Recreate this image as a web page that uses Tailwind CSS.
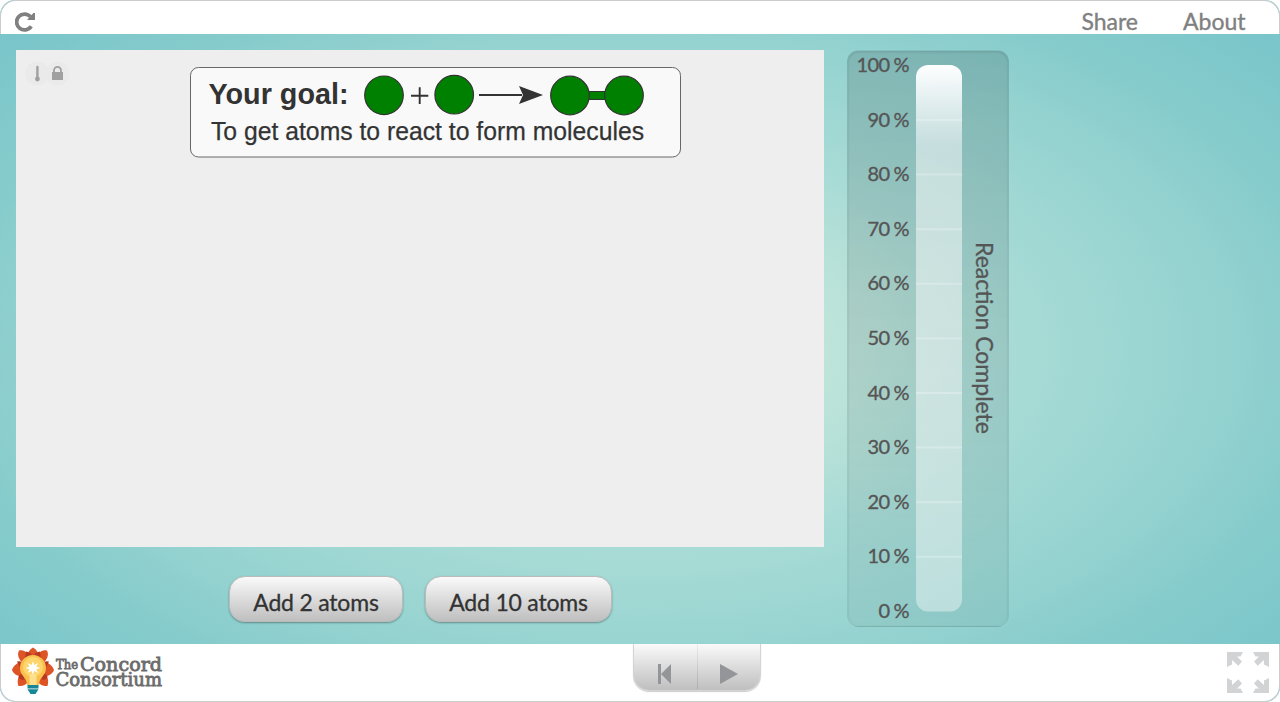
<!DOCTYPE html>
<html lang="en">
<head>
<meta charset="utf-8">
<title>Reaction Complete</title>
<script src="https://cdn.jsdelivr.net/npm/@tailwindcss/browser@4"></script>
</head>
<body class="bg-white font-['Lato',sans-serif] overflow-hidden">
<div class="w-[1280px] h-[702px] flex flex-col overflow-hidden rounded-[15px] bg-[radial-gradient(ellipse_at_center,#d5efe0_0%,#bee4da_21%,#a8dbd6_41%,#95d3d0_63%,#87cccc_76%,#75c3c9_100%)]">
  <header class="h-[34px] shrink-0 bg-white border border-b-0 border-[#ccc] rounded-t-[16px] flex items-start text-[#808080] text-[23px] leading-[28px] [-webkit-text-stroke:0.35px_#808080]">
    <svg class="ml-[14px] mt-[10px]" width="22" height="22" viewBox="0 0 22 22"><path d="M16.200 15.200A7.900 7.900 0 1 1 15.500 5.800" fill="none" stroke="#808080" stroke-width="3.800"/><path d="M12 9h8V2h-1.600z" fill="#808080"/></svg>
    <span class="ml-auto mt-[6px]">Share</span>
    <span class="ml-[45px] mr-[33.500px] mt-[6px]">About</span>
  </header>

  <main class="h-[610px] shrink-0 flex">
    <section class="w-[808px] ml-[16px] pt-[16px] flex flex-col">
      <div class="h-[497px] bg-[#eee] flex items-start">
        <svg class="ml-[8px] mt-[11px]" width="48" height="25" viewBox="0 0 48 25">
          <circle cx="13" cy="12.500" r="12" fill="#eaeaea"/><circle cx="33.500" cy="12.500" r="12" fill="#eaeaea"/>
          <path d="M13.400 6v11" stroke="#a0a0a0" stroke-width="2.400" stroke-linecap="round"/><circle cx="13.400" cy="18" r="2.400" fill="#a0a0a0"/>
          <rect x="28" y="11" width="11" height="8" fill="#a0a0a0"/><path d="M30 11.500V9.500a3.500 3.700 0 0 1 7 0v2" fill="none" stroke="#a0a0a0" stroke-width="1.800"/>
        </svg>
        <svg class="ml-[118px] mt-[16px]" width="492" height="92" viewBox="190 66 492 92" font-family="Liberation Sans, Arial, sans-serif" fill="#333">
          <rect x="190.500" y="67.500" width="490" height="89.500" rx="8" fill="#f9f9f9" stroke="#666" stroke-width="1"/>
          <text x="208.500" y="104" font-size="29" font-weight="700" textLength="140" lengthAdjust="spacingAndGlyphs">Your goal:</text>
          <text x="211" y="140" font-size="25.500" stroke="#333" stroke-width=".25" textLength="433" lengthAdjust="spacingAndGlyphs">To get atoms to react to form molecules</text>
          <g fill="#008000" stroke="#333" stroke-width="1.200">
            <circle cx="384" cy="95.300" r="19.300"/><circle cx="454.200" cy="94.700" r="19.300"/>
            <rect x="586" y="91.500" width="22" height="8" stroke-width="1"/>
            <circle cx="570" cy="95.500" r="19.300"/><circle cx="624" cy="95.500" r="19.300"/>
          </g>
          <path d="M411 95.700h17.300M419.700 87.300v16.700" stroke="#333" stroke-width="1.900"/>
          <path d="M479 95h43" stroke="#333" stroke-width="2"/><path d="M519 86l24 9-24 9 4-9z"/>
        </svg>
      </div>
      <div class="mt-[29px] ml-[213px] flex gap-[22px] text-[23px] tracking-[-0.2px] text-[#333] [text-shadow:0_1px_1px_#fff] [-webkit-text-stroke:0.3px_#333]">
        <button class="w-[174px] h-[46px] pt-[7px] rounded-[16px] border border-[#bbb] bg-linear-to-b from-[#fafafa] to-[#bfbfbf] shadow-[0_1px_2px_rgba(0,0,0,.35)] whitespace-nowrap">Add 2 atoms</button>
        <button class="w-[187px] h-[46px] pt-[7px] rounded-[16px] border border-[#bbb] bg-linear-to-b from-[#fafafa] to-[#bfbfbf] shadow-[0_1px_2px_rgba(0,0,0,.35)] whitespace-nowrap">Add 10 atoms</button>
      </div>
    </section>

    <section class="ml-[23px] mt-[16px] w-[162px] h-[577px] rounded-[12px] border border-black/4 bg-linear-to-b from-black/13 to-black/4 shadow-[inset_0_1px_3px_rgba(0,0,0,.12)] flex text-[#555] [-webkit-text-stroke:0.35px_#555]">
      <div class="w-[61px] h-[570px] flex flex-col justify-between text-right text-[20px] leading-[24px] tracking-[-0.6px] [word-spacing:-0.5px] mt-[1px] whitespace-nowrap">
        <span>100 %</span><span>90 %</span><span>80 %</span><span>70 %</span><span>60 %</span><span>50 %</span><span>40 %</span><span>30 %</span><span>20 %</span><span>10 %</span><span>0 %</span>
      </div>
      <svg class="ml-[7px] mt-[14px]" width="46" height="547" viewBox="0 0 46 547">
        <defs><linearGradient id="shine" x1="0" y1="0" x2="0" y2="1"><stop offset="0" stop-color="#fff"/><stop offset=".15" stop-color="#f2f6f9" stop-opacity=".56"/><stop offset=".19" stop-color="#fff" stop-opacity=".5"/><stop offset="1" stop-color="#fff" stop-opacity=".4"/></linearGradient></defs>
        <rect width="46" height="546.500" rx="12" fill="url(#shine)"/>
        <path d="M0 55h46M0 109.600h46M0 164.200h46M0 218.800h46M0 273.400h46M0 328h46M0 382.600h46M0 437.200h46M0 491.800h46" stroke="#fff" stroke-opacity=".25" stroke-width="2"/>
      </svg>
      <div class="ml-[9px] mt-[191px] h-[196px] w-[28px] leading-[28px] text-[23px] whitespace-nowrap [writing-mode:vertical-rl]">Reaction Complete</div>
    </section>
  </main>

  <footer class="h-[58px] shrink-0 bg-white border border-t-0 border-[#ccc] rounded-b-[16px] flex items-start">
    <svg class="ml-[9px]" width="156" height="54" viewBox="10 644 156 54">
      <g fill="#dd5426">
        <path id="petal" d="M33 669Q22 654 33 647.500Q44 654 33 669z"/>
        <path d="M33 669C20 664 16 656 19 650.500C25 649 31 654 33 669C35 654 41 649 47 650.500C50 656 46 664 33 669z"/>
        <path d="M33 669C27 660 16 660 12 670C14 676 24 680 33 669C42 680 52 676 54 670C50 660 39 660 33 669z"/>
        <path d="M33 669C20 670 16 678 18.500 686C26 687 30 682 33 669C36 682 40 687 47.500 686C50 678 46 670 33 669z"/>
      </g>
      <g fill="#b83820"><path d="M26 651.500q6 1 7 6l-8 2zM40 651.500q-6 1-7 6l8 2zM17 661.500q5-1 6 2l-3 4zM49 661.500q-5-1-6 2l3 4zM18.500 675.500l4-2 2 6q-6 1-6-4zM47.500 675.500l-4-2-2 6q6 1 6-4z"/></g>
      <path d="M20 668a13 13 0 0 1 26 0c0 8-7 9-7 17h-12c0-8-7-9-7-17z" fill="#f9c04d"/>
      <circle cx="33" cy="667" r="10" fill="#fdd56c"/>
      <path d="M29.500 674h7v11h-7z" fill="#fde08d"/>
      <path d="M33 661l1.200 4 4-2-2 3.500 4 1.500-4 1.500 2 3.500-4-2-1.200 4-1.500-4-4 2 2-3.500-4-1.500 4-1.500-2-3.500 4 2z" fill="#fff"/>
      <path d="M27.500 685h11v3.500h-11zM27.500 689.300h11l-3 4.700h-5z" fill="#168797"/>
      <g font-family="DejaVu Serif, serif" fill="#6b6b6b" stroke="#6b6b6b" stroke-width=".8">
        <text x="56" y="669" font-size="12.500" textLength="22" lengthAdjust="spacingAndGlyphs">The</text>
        <text x="80" y="670.500" font-size="18" textLength="82" lengthAdjust="spacingAndGlyphs">Concord</text>
        <text x="55.500" y="686" font-size="18" textLength="106.500" lengthAdjust="spacingAndGlyphs">Consortium</text>
      </g>
    </svg>
    <div class="ml-[467px] w-[128px] h-[47px] flex rounded-b-[16px] border border-t-0 border-[#d4d4d4] bg-linear-to-b from-[#fafafa] to-[#bfbfbf] shadow-[0_1px_1px_rgba(0,0,0,.2)]">
      <div class="w-[63px]"><svg width="62" height="46" viewBox="634 644 62 46"><path d="M658 664h3v20h-3zM671 664v20l-10-10z" fill="#939598"/></svg></div>
      <div class="w-px h-[45px] bg-linear-to-b from-[#eee] to-[#aaa]"></div>
      <div><svg width="62" height="46" viewBox="698 644 62 46"><path d="M720 664v20l18-10z" fill="#939598"/></svg></div>
    </div>
    <svg class="ml-auto mr-[9px] mt-[7px]" width="44" height="44" viewBox="1226 651 44 44">
      <g fill="#d1d3d4"><path id="arr" d="M1227 652h16l-2.500 4.500h-3.500l5 5-3.700 4.200-6.300-5.700v4.500l-5 2.500z"/>
      <use href="#arr" transform="matrix(-1 0 0 1 2496 0)"/><use href="#arr" transform="matrix(1 0 0 -1 0 1345)"/><use href="#arr" transform="matrix(-1 0 0 -1 2496 1345)"/></g>
    </svg>
  </footer>
</div>
</body>
</html>
